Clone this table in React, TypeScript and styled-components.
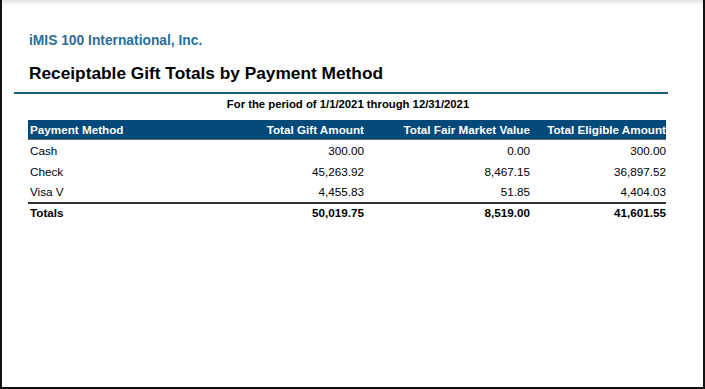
import React from 'react';
import styled, { createGlobalStyle } from 'styled-components';

const GlobalStyle = createGlobalStyle`
  html, body {
    margin: 0;
    padding: 0;
    background: #ffffff;
  }
  body {
    font-family: "Liberation Sans", Arial, sans-serif;
  }
`;

const Frame = styled.div`
  box-sizing: border-box;
  width: 705px;
  height: 389px;
  border: 2px solid #111;
  border-top: none;
  background: #fff;
  position: relative;
  overflow: hidden;

  &::before {
    content: '';
    position: absolute;
    left: 0;
    right: 0;
    top: 0;
    height: 6px;
    background: linear-gradient(#e4e4e4, #ffffff);
  }
`;

const Page = styled.div`
  padding: 33px 35px 0 12px;
  display: flex;
  flex-direction: column;
`;

const Company = styled.div`
  padding-left: 15px;
  font-size: 13.8px;
  font-weight: bold;
  color: #2a6f97;
`;

const Title = styled.h1`
  margin: 15px 0 0;
  padding-left: 15px;
  font-size: 17.3px;
  font-weight: bold;
  color: #000;
`;

const Rule = styled.div`
  margin-top: 8px;
  height: 2px;
  background: #1d5f82;
`;

const Period = styled.div`
  margin-top: 4px;
  padding-left: 14px;
  text-align: center;
  font-size: 11.3px;
  font-weight: bold;
  color: #000;
`;

const Table = styled.div`
  margin: 10px 0 0 14px;
  display: grid;
  grid-template-columns: 150px 186px 166px 136px;
`;

const HeadCell = styled.div<{ $right?: boolean }>`
  height: 19px;
  line-height: 19px;
  background: #03497a;
  color: #fff;
  font-size: 11.7px;
  font-weight: bold;
  white-space: nowrap;
  text-align: ${(p) => (p.$right ? 'right' : 'left')};
  padding-left: ${(p) => (p.$right ? '0' : '2px')};
  border-bottom: 1px solid #6a6a6a;
`;

const Cell = styled.div<{ $right?: boolean; $total?: boolean }>`
  height: ${(p) => (p.$total ? '17px' : '20.7px')};
  line-height: ${(p) => (p.$total ? '17px' : '21px')};
  font-size: 11.7px;
  font-weight: ${(p) => (p.$total ? 'bold' : 'normal')};
  color: #000;
  white-space: nowrap;
  text-align: ${(p) => (p.$right ? 'right' : 'left')};
  padding-left: ${(p) => (p.$right ? '0' : '2px')};
  border-top: ${(p) => (p.$total ? '2px solid #333' : 'none')};
`;

const rows = [
  ['Cash', '300.00', '0.00', '300.00'],
  ['Check', '45,263.92', '8,467.15', '36,897.52'],
  ['Visa V', '4,455.83', '51.85', '4,404.03'],
];

const totals = ['Totals', '50,019.75', '8,519.00', '41,601.55'];

const headers = ['Payment Method', 'Total Gift Amount', 'Total Fair Market Value', 'Total Eligible Amount'];

export default function App() {
  return (
    <>
      <GlobalStyle />
      <Frame>
        <Page>
          <Company>iMIS 100 International, Inc.</Company>
          <Title>Receiptable Gift Totals by Payment Method</Title>
          <Rule />
          <Period>For the period of 1/1/2021 through 12/31/2021</Period>
          <Table>
            {headers.map((h, i) => (
              <HeadCell key={h} $right={i > 0}>
                {h}
              </HeadCell>
            ))}
            {rows.map((r) =>
              r.map((v, i) => (
                <Cell key={r[0] + i} $right={i > 0}>
                  {v}
                </Cell>
              ))
            )}
            {totals.map((v, i) => (
              <Cell key={'t' + i} $right={i > 0} $total>
                {v}
              </Cell>
            ))}
          </Table>
        </Page>
      </Frame>
    </>
  );
}
